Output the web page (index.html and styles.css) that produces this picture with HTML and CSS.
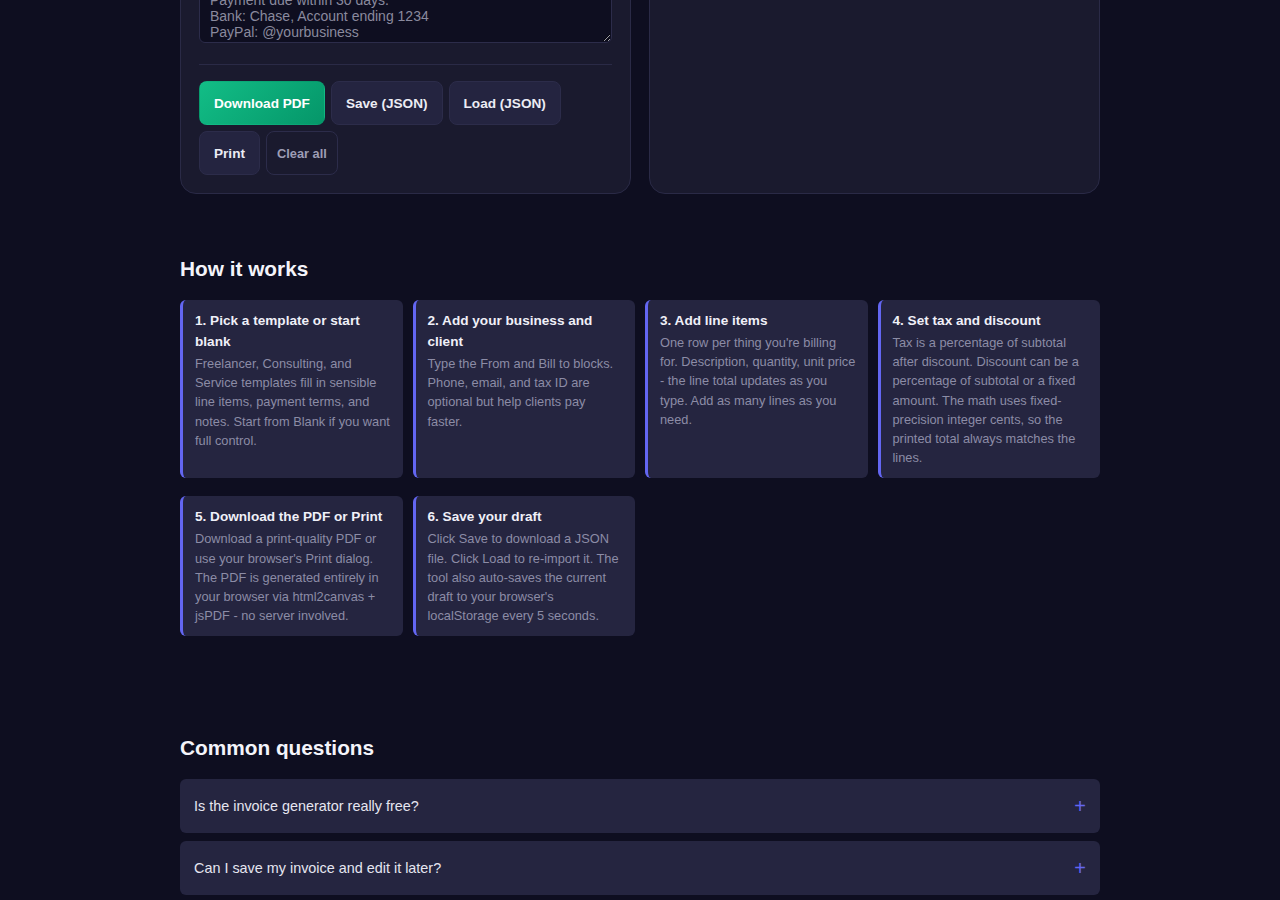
FILE: index.html
```html
<!DOCTYPE html>
<html lang="en">
<head>
    <meta charset="UTF-8">
    <meta name="viewport" content="width=device-width, initial-scale=1.0">
    <title>Free Invoice Generator</title>
    <link rel="stylesheet" href="styles.css">
</head>
<body>
    <div class="page">
        <div class="tool">
            <div class="panel editor">
                <label class="field-label" for="notes">Notes / payment terms</label>
                <textarea id="notes" class="notes" placeholder="Thank you for your business!
Please include the invoice number with payment.
Net 30.
Payment due within 30 days.
Bank: Chase, Account ending 1234
PayPal: @yourbusiness"></textarea>
                <div class="divider"></div>
                <div class="actions">
                    <button class="btn btn-primary">Download PDF</button>
                    <button class="btn">Save (JSON)</button>
                    <button class="btn">Load (JSON)</button>
                    <button class="btn">Print</button>
                    <button class="btn btn-ghost">Clear all</button>
                </div>
            </div>
            <div class="panel preview"></div>
        </div>

        <section class="section how">
            <h2>How it works</h2>
            <div class="steps">
                <div class="step">
                    <h3>1. Pick a template or start blank</h3>
                    <p>Freelancer, Consulting, and Service templates fill in sensible line items, payment terms, and notes. Start from Blank if you want full control.</p>
                </div>
                <div class="step">
                    <h3>2. Add your business and client</h3>
                    <p>Type the From and Bill to blocks. Phone, email, and tax ID are optional but help clients pay faster.</p>
                </div>
                <div class="step">
                    <h3>3. Add line items</h3>
                    <p>One row per thing you're billing for. Description, quantity, unit price - the line total updates as you type. Add as many lines as you need.</p>
                </div>
                <div class="step">
                    <h3>4. Set tax and discount</h3>
                    <p>Tax is a percentage of subtotal after discount. Discount can be a percentage of subtotal or a fixed amount. The math uses fixed-precision integer cents, so the printed total always matches the lines.</p>
                </div>
                <div class="step">
                    <h3>5. Download the PDF or Print</h3>
                    <p>Download a print-quality PDF or use your browser's Print dialog. The PDF is generated entirely in your browser via html2canvas + jsPDF - no server involved.</p>
                </div>
                <div class="step">
                    <h3>6. Save your draft</h3>
                    <p>Click Save to download a JSON file. Click Load to re-import it. The tool also auto-saves the current draft to your browser's localStorage every 5 seconds.</p>
                </div>
            </div>
        </section>

        <section class="section faq">
            <h2>Common questions</h2>
            <div class="faq-item">
                <span>Is the invoice generator really free?</span>
                <span class="plus">+</span>
            </div>
            <div class="faq-item">
                <span>Can I save my invoice and edit it later?</span>
                <span class="plus">+</span>
            </div>
        </section>
    </div>
</body>
</html>
```

FILE: styles.css
```css
* {
    margin: 0;
    padding: 0;
    box-sizing: border-box;
}

body {
    background: #0e0e20;
    color: #e6e6f0;
    font-family: "Liberation Sans", Arial, sans-serif;
    overflow: hidden;
}

.page {
    width: 920px;
    margin: 0 auto;
}

.tool {
    display: grid;
    grid-template-columns: 451px 451px;
    gap: 18px;
    margin-top: -106px;
}

.panel {
    background: #1a1a2e;
    border: 1px solid #2a2a46;
    border-radius: 16px;
}

.editor {
    padding: 18px;
}

.field-label {
    display: block;
    font-size: 13px;
    line-height: 16px;
    margin-bottom: 6px;
    color: #a0a0b8;
}

.notes {
    display: block;
    width: 100%;
    height: 108px;
    padding: 8px 10px;
    background: #0e0e20;
    border: 1px solid #2c2c4a;
    border-radius: 6px;
    color: #e6e6f0;
    font-family: "Liberation Sans", Arial, sans-serif;
    font-size: 14px;
    line-height: 16px;
    overflow: hidden;
    resize: vertical;
}

.notes::placeholder {
    color: #8a8a9e;
}

.divider {
    height: 1px;
    background: #2a2a46;
    margin: 21px 0 16px 0;
}

.actions {
    display: flex;
    flex-wrap: wrap;
    gap: 6px;
}

.btn {
    height: 44px;
    padding: 0 14px;
    background: #242440;
    border: 1px solid #2c2c4a;
    border-radius: 8px;
    color: #ececf4;
    font-family: "Liberation Sans", Arial, sans-serif;
    font-size: 13.6px;
    font-weight: bold;
    cursor: pointer;
}

.btn-primary {
    background: linear-gradient(135deg, #12bd86, #059669);
    border-color: transparent;
    color: #fff;
}

.btn-ghost {
    background: transparent;
    color: #9d9db5;
    font-size: 12.8px;
    padding: 0 10px;
}

.section h2 {
    font-size: 20.8px;
    line-height: 24px;
    color: #f4f4fa;
    margin-bottom: 19px;
}

.how {
    margin-top: 63px;
}

.steps {
    display: grid;
    grid-template-columns: repeat(4, 1fr);
    gap: 18px 10px;
}

.step {
    background: #252540;
    border-left: 3px solid #6366f1;
    border-radius: 6px;
    padding: 10px 12px 11px 12px;
}

.step h3 {
    font-size: 13.6px;
    line-height: 21px;
    color: #f0f0f8;
    margin-bottom: 2px;
}

.step p {
    font-size: 12.8px;
    line-height: 19.2px;
    color: #8c8ca6;
}

.faq {
    margin-top: 100px;
}

.faq-item {
    display: flex;
    justify-content: space-between;
    align-items: center;
    height: 54px;
    padding: 0 14px;
    margin-bottom: 8px;
    background: #252540;
    border-radius: 6px;
    font-size: 14.4px;
    color: #e6e6f0;
}

.plus {
    color: #6366f1;
    font-size: 20px;
    line-height: 20px;
}
```
